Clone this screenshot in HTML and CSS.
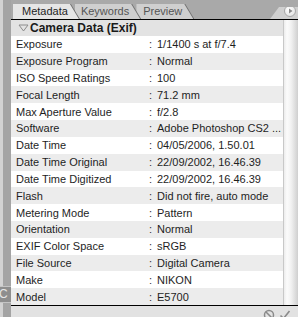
FILE: index.html
```html
<!DOCTYPE html>
<html>
<head>
<meta charset="utf-8">
<link rel="stylesheet" href="styles.css">
</head>
<body>
<div class="app">
  <div class="side"><div class="side-btn">C</div></div>
  <div class="main">
    <div class="tabbar">
      <div class="tab active"><span>Metadata</span></div>
      <div class="tab t2"><span>Keywords</span></div>
      <div class="tab t3"><span>Preview</span></div>
      <div class="spacer"></div>
      <div class="menu">
        <div class="menu-btn">
          <svg width="5" height="6" viewBox="0 0 5 6"><path d="M1 0.5 L4.5 3 L1 5.5 Z" fill="#8a8a8a"/></svg>
        </div>
      </div>
    </div>
    <div class="body">
      <div class="list">
        <div class="section">
          <svg class="tri" width="11" height="8" viewBox="0 0 11 8"><path d="M1 1 H10 L5.5 7 Z" fill="none" stroke="#8c8c8c" stroke-width="1"/></svg>
          <span>Camera Data (Exif)</span>
        </div>
        <div class="row"><span class="k">Exposure</span><span class="c">:</span><span class="v">1/1400 s at f/7.4</span></div>
        <div class="row"><span class="k">Exposure Program</span><span class="c">:</span><span class="v">Normal</span></div>
        <div class="row"><span class="k">ISO Speed Ratings</span><span class="c">:</span><span class="v">100</span></div>
        <div class="row"><span class="k">Focal Length</span><span class="c">:</span><span class="v">71.2 mm</span></div>
        <div class="row"><span class="k">Max Aperture Value</span><span class="c">:</span><span class="v">f/2.8</span></div>
        <div class="row"><span class="k">Software</span><span class="c">:</span><span class="v">Adobe Photoshop CS2 ...</span></div>
        <div class="row"><span class="k">Date Time</span><span class="c">:</span><span class="v">04/05/2006, 1.50.01</span></div>
        <div class="row"><span class="k">Date Time Original</span><span class="c">:</span><span class="v">22/09/2002, 16.46.39</span></div>
        <div class="row"><span class="k">Date Time Digitized</span><span class="c">:</span><span class="v">22/09/2002, 16.46.39</span></div>
        <div class="row"><span class="k">Flash</span><span class="c">:</span><span class="v">Did not fire, auto mode</span></div>
        <div class="row"><span class="k">Metering Mode</span><span class="c">:</span><span class="v">Pattern</span></div>
        <div class="row"><span class="k">Orientation</span><span class="c">:</span><span class="v">Normal</span></div>
        <div class="row"><span class="k">EXIF Color Space</span><span class="c">:</span><span class="v">sRGB</span></div>
        <div class="row"><span class="k">File Source</span><span class="c">:</span><span class="v">Digital Camera</span></div>
        <div class="row"><span class="k">Make</span><span class="c">:</span><span class="v">NIKON</span></div>
        <div class="row"><span class="k">Model</span><span class="c">:</span><span class="v">E5700</span></div>
      </div>
      <div class="scroll"></div>
    </div>
    <div class="foot">
      <svg width="12" height="12" viewBox="0 0 12 12"><circle cx="6" cy="6" r="4.5" fill="none" stroke="#8a8a8a" stroke-width="1.5"/><path d="M3 3 L9 9" stroke="#8a8a8a" stroke-width="1.5"/></svg>
      <svg width="12" height="12" viewBox="0 0 12 12"><path d="M1.5 6.5 L4.5 9.5 L10.5 2" fill="none" stroke="#8a8a8a" stroke-width="1.6"/></svg>
    </div>
  </div>
</div>
</body>
</html>
```

FILE: styles.css
```css
html, body {
  margin: 0;
  padding: 0;
}
body {
  width: 298px;
  height: 317px;
  overflow: hidden;
  background: #a9a9a9;
  font-family: "Liberation Sans", Arial, sans-serif;
  font-size: 11px;
  color: #1e1e1e;
}
.app {
  display: flex;
  width: 298px;
  height: 317px;
}
.side {
  width: 11px;
  flex: none;
  background: linear-gradient(to right, #d2d2d2 0 3px, #a4a4a4 3px 100%);
  display: flex;
  flex-direction: column;
  justify-content: flex-end;
  padding-bottom: 14px;
  box-sizing: border-box;
  overflow: hidden;
}
.side-btn {
  height: 15px;
  background: #8e8e8e;
  border-top: 1px solid #c4c4c4;
  border-bottom: 1px solid #c4c4c4;
  color: #e6e6e6;
  font-size: 12px;
  line-height: 15px;
  text-indent: -1px;
}
.main {
  flex: 1;
  display: flex;
  flex-direction: column;
  min-width: 0;
}
.tabbar {
  height: 19px;
  border-bottom: 1px solid #000;
  background: #a9a9a9;
  display: flex;
  align-items: flex-end;
  padding-left: 2px;
}
.tab {
  position: relative;
  height: 15px;
  padding: 0 12px 0 9px;
  margin-right: -5px;
  color: #555;
  line-height: 15px;
}
.tab::before {
  content: "";
  position: absolute;
  inset: 0;
  background: #707070;
  clip-path: polygon(0 0, calc(100% - 9px) 0, 100% 100%, 0 100%);
}
.tab::after {
  content: "";
  position: absolute;
  inset: 0 1px 0 0;
  background: #cfcfcf;
  clip-path: polygon(0 0, calc(100% - 9px) 0, 100% 100%, 0 100%);
}
.tab span {
  position: relative;
  z-index: 1;
}
.tab.active {
  z-index: 3;
  color: #1e1e1e;
}
.tab.active::after {
  background: #e6e6e6;
}
.tab.t2 {
  z-index: 2;
  padding-left: 6px;
}
.tab.t3 {
  z-index: 1;
  padding-left: 7px;
}
.spacer {
  flex: 1;
}
.menu {
  width: 28px;
  height: 12px;
  background: #d0d0d0;
  clip-path: polygon(9px 0, 100% 0, 100% 100%, 0 100%);
  display: flex;
  align-items: center;
  justify-content: flex-end;
  padding-right: 2px;
  box-sizing: border-box;
}
.menu-btn {
  width: 10px;
  height: 10px;
  border-radius: 50%;
  border: 1px solid #a8a8a8;
  background: radial-gradient(circle at 40% 35%, #ffffff, #dcdcdc);
  display: flex;
  align-items: center;
  justify-content: center;
  margin-top: -4px;
}
.body {
  height: 285px;
  display: flex;
}
.list {
  flex: 1;
  display: grid;
  grid-template-rows: 16px repeat(16, 1fr);
  min-width: 0;
}
.section {
  background: #e3e3e3;
  display: flex;
  align-items: center;
  font-weight: bold;
  font-size: 12px;
  color: #1a1a1a;
}
.tri {
  margin: 0 1px 0 7px;
}
.row {
  display: grid;
  grid-template-columns: 138px 8px 1fr;
  align-items: center;
  white-space: nowrap;
  overflow: hidden;
}
.row:nth-child(even) {
  background: #ffffff;
}
.row:nth-child(odd) {
  background: #ececec;
}
.k {
  padding-left: 5px;
}
.c {
  color: #333;
}
.scroll {
  width: 15px;
  flex: none;
  box-sizing: border-box;
  border-left: 1px solid #c8c8c8;
  background: linear-gradient(to right, #ececec 0, #fbfbfb 3px, #f2f2f2 7px, #cfcfcf 100%);
}
.foot {
  flex: 1;
  border-top: 1px solid #000;
  background: #e2e2e2;
  display: flex;
  justify-content: flex-end;
  align-items: flex-start;
  gap: 4px;
  padding: 3px 7px 0 0;
  overflow: hidden;
}
```
